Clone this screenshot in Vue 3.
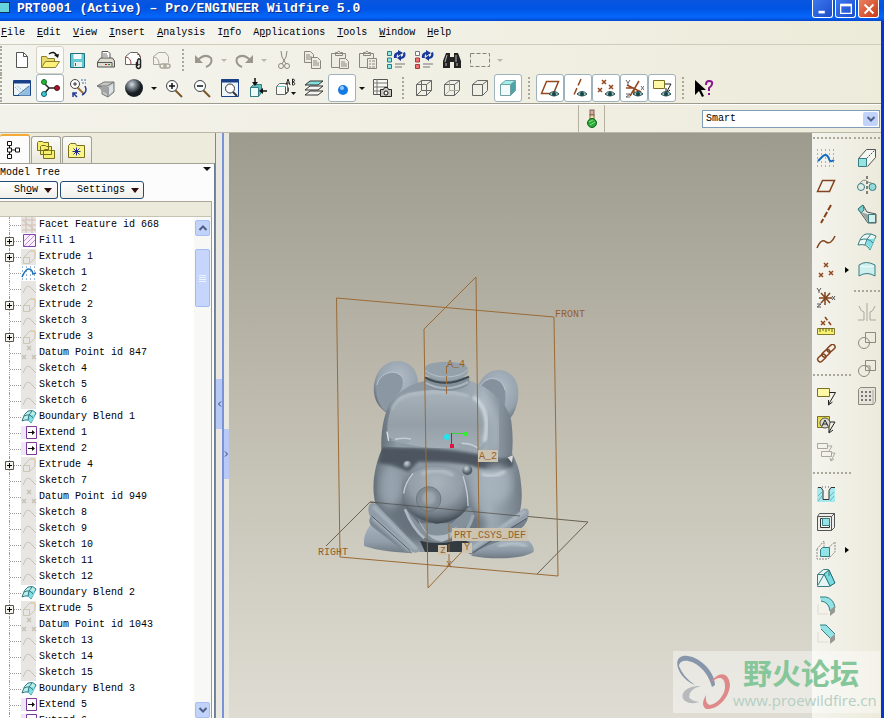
<template>
  <div class="window">
    <header class="titlebar">
      <span class="app-icon"></span>
      <h1>PRT0001 (Active) – Pro/ENGINEER Wildfire 5.0</h1>
      <div class="window-controls">
        <button type="button" aria-label="Minimize">
          <svg viewBox="0 0 18 18"><path d="M4 12.500h7" stroke="#fff" stroke-width="3" /></svg>
        </button>
        <button type="button" aria-label="Maximize">
          <svg viewBox="0 0 18 18"><path d="M3 4h12v10H3z" stroke="#fff" fill="none" stroke-width="1.500" /><path d="M2.500 4.500h13" stroke="#fff" stroke-width="3" /></svg>
        </button>
        <button type="button" class="close" aria-label="Close">
          <svg viewBox="0 0 18 18"><path d="M4 4l10 10M14 4L4 14" stroke="#fff" stroke-width="2.200" /></svg>
        </button>
      </div>
    </header>

    <div class="frame">
      <nav class="menubar">
        <a v-for="m in menus" :key="m.join('')" href="#">{{ m[0] }}<u>{{ m[1] }}</u>{{ m[2] }}</a>
      </nav>

      <div class="toolbars">
        <div v-for="(row, r) in toolbars" :key="r" class="toolbar">
          <template v-for="(item, i) in row" :key="i">
            <span v-if="item === '|'" class="grip"></span>
            <button v-else-if="item === 'v' || item === 'w'" type="button" class="drop" aria-label="More">
              <svg viewBox="0 0 8 5"><path d="M1 1h6L4 4z" :fill="item === 'v' ? '#111' : '#bbb9ae'" /></svg>
            </button>
            <button
              v-else
              type="button"
              class="tool"
              :class="{ pressed: pressed.includes(item), hover: item === 'open' }"
              :aria-label="item"
            >
              <svg viewBox="0 0 20 20" fill="none" v-html="icons[item]"></svg>
            </button>
          </template>
        </div>
      </div>

      <div class="message-bar">
        <span class="status-cell">
          <svg viewBox="0 0 12 20">
            <rect x="4" y="1" width="4" height="5" fill="#d8aaa0" stroke="#7c6258" />
            <rect x="4" y="6" width="4" height="4" fill="#f0e8a0" stroke="#7c6258" />
            <circle cx="6" cy="14" r="4.500" fill="#29ac35" stroke="#126320" />
            <path d="M3 13l4-2M4 16l5-3" stroke="#8fe08c" />
          </svg>
        </span>
        <label class="filter">
          <select v-model="filter" aria-label="Selection filter">
            <option>Smart</option>
            <option>Features</option>
            <option>Geometry</option>
            <option>Datums</option>
          </select>
          <span class="filter-arrow"><svg viewBox="0 0 10 8"><path d="M1.500 2L5 5.500 8.500 2" fill="none" stroke="#4d6185" stroke-width="2" /></svg></span>
        </label>
      </div>

      <main class="workspace">
        <aside class="navigator">
          <div class="tabs">
            <button type="button" class="tab active" aria-label="Model Tree">
              <svg viewBox="0 0 20 20" fill="#fff" stroke="#111"><path d="M6.500 4v12M8.500 10h6" /><path d="M4.500 1.500h4v4h-4zM4.500 8h4v4h-4zM4.500 14.500h4v4h-4zM12.500 8h4v4h-4z" /></svg>
            </button>
            <button type="button" class="tab" aria-label="Folder Browser">
              <svg viewBox="0 0 20 20" fill="#f7ef70" stroke="#77701c"><path d="M1.500 2.500l1-1h4l1 1h5v8h-11zM4.500 6.500l1-1h4l1 1h5v8h-11zM7.500 10.500l1-1h4l1 1h5v8h-11z" /></svg>
            </button>
            <button type="button" class="tab" aria-label="Favorites">
              <svg viewBox="0 0 20 20"><path d="M1.500 5.500l2-2h5l1 2h8v12h-16z" fill="#fbf58c" stroke="#77701c" /><path d="M9.500 7.500v8M5.500 11.500h8M6.500 8.500l6 6M12.500 8.500l-6 6" stroke="#1c2c98" /></svg>
            </button>
          </div>
          <section class="panel">
            <div class="panel-head">
              <h2>Model Tree</h2>
              <svg class="panel-menu" viewBox="0 0 8 5"><path d="M0 0h8L4 4z" fill="#111" /></svg>
            </div>
            <div class="panel-actions">
              <button type="button" class="show">Sh<u>o</u>w <svg viewBox="0 0 8 5"><path d="M0 0h8L4 5z" fill="#300c0c" /></svg></button>
              <button type="button" class="settings">Settin<u>g</u>s <svg viewBox="0 0 8 5"><path d="M0 0h8L4 5z" fill="#300c0c" /></svg></button>
            </div>
            <div class="column-head"></div>
            <div class="tree-wrap">
              <ul class="tree">
                <li v-for="node in tree" :key="node.label">
                  <button v-if="node.type === 'extrude' || node.type === 'fill'" type="button" class="expand" :aria-label="`Expand ${node.label}`">
                    <svg viewBox="0 0 9 9"><path d="M.5.5h8v8h-8z" fill="#f4f2ea" stroke="#555" /><path d="M2 4.500h5M4.500 2v5" stroke="#000" /></svg>
                  </button>
                  <span class="branch"></span>
                  <svg class="node-icon" viewBox="0 0 16 16" fill="none" v-html="nodeIcons[node.type]"></svg>
                  <span>{{ node.label }}</span>
                </li>
              </ul>
              <div class="scrollbar">
                <button type="button" aria-label="Scroll up"><svg viewBox="0 0 10 8"><path d="M1.500 6L5 2.500 8.500 6" fill="none" stroke="#4d6185" stroke-width="2" /></svg></button>
                <div class="track"><div class="thumb"><i></i><i></i><i></i><i></i></div></div>
                <button type="button" aria-label="Scroll down"><svg viewBox="0 0 10 8"><path d="M1.500 2L5 5.500 8.500 2" fill="none" stroke="#4d6185" stroke-width="2" /></svg></button>
              </div>
            </div>
          </section>
        </aside>

        <div class="sash sash-left">
          <button type="button" aria-label="Collapse navigator"><svg viewBox="0 0 5 6"><path d="M4 .5L1.500 3 4 5.500" fill="none" stroke="#27407c" /></svg></button>
        </div>
        <div class="sash sash-right">
          <button type="button" aria-label="Expand browser"><svg viewBox="0 0 5 6"><path d="M1 .5L3.500 3 1 5.500" fill="none" stroke="#27407c" /></svg></button>
        </div>

        <section class="viewport">
          <svg class="scene" viewBox="229 133 583 585" preserveAspectRatio="xMidYMid meet">
            <defs>
              <linearGradient id="skin" x1="0" y1="0" x2="1" y2="0">
                <stop offset="0" stop-color="#66717b" />
                <stop offset=".12" stop-color="#8e9aa4" />
                <stop offset=".45" stop-color="#8c97a1" />
                <stop offset=".78" stop-color="#a3afb9" />
                <stop offset="1" stop-color="#717c86" />
              </linearGradient>
              <linearGradient id="cap" x1="0" y1="0" x2="0" y2="1">
                <stop offset="0" stop-color="#a7b2ba" />
                <stop offset=".6" stop-color="#949fa8" />
                <stop offset="1" stop-color="#a3aeb7" />
              </linearGradient>
              <radialGradient id="muzzle" cx=".5" cy=".28" r=".72">
                <stop offset="0" stop-color="#a9b4bd" />
                <stop offset=".55" stop-color="#929da7" />
                <stop offset=".8" stop-color="#6d7882" />
                <stop offset="1" stop-color="#3d464e" />
              </radialGradient>
              <radialGradient id="ear" cx=".55" cy=".35" r=".65">
                <stop offset="0" stop-color="#b3bec8" />
                <stop offset=".7" stop-color="#95a1ac" />
                <stop offset="1" stop-color="#656f79" />
              </radialGradient>
              <linearGradient id="limb" x1="0" y1="0" x2="0" y2="1">
                <stop offset="0" stop-color="#a6b2bc" />
                <stop offset=".6" stop-color="#919da8" />
                <stop offset="1" stop-color="#6f7a85" />
              </linearGradient>
              <radialGradient id="bead" cx=".4" cy=".3">
                <stop offset="0" stop-color="#cdd6dc" />
                <stop offset="1" stop-color="#56616b" />
              </radialGradient>
              <filter id="soft"><feGaussianBlur stdDeviation="5" /></filter>
              <filter id="softer"><feGaussianBlur stdDeviation="12" /></filter>
              <clipPath id="body-clip"><path :d="bodyPath" /></clipPath>
            </defs>

            <path d="M326 546L370 502 588 522 537 574" fill="none" stroke="#6b6250" />

            <g transform="translate(355 350) scale(.3333)">
              <!-- ears -->
              <path d="M100 190C55 168 43 110 72 62C98 25 150 24 175 55Q187 72 190 98L140 150z" fill="url(#ear)" />
              <path d="M66 105C72 68 122 54 140 80C152 108 132 132 112 150L94 186C70 170 60 135 66 105z" fill="#8b97a2" />
              <path d="M66 105C72 68 122 54 140 80" fill="none" stroke="#bcc6ce" stroke-width="3" />
              <path d="M362 135C368 90 400 55 440 61C488 70 498 120 485 165C476 202 455 221 430 221z" fill="url(#ear)" />
              <path d="M376 108C398 72 442 82 450 120C456 160 442 200 430 219C418 190 400 165 366 142z" fill="#85919c" />
              <path d="M376 108C398 72 442 82 450 120" fill="none" stroke="#bcc6ce" stroke-width="3" />

              <!-- body and head -->
              <path :d="bodyPath" fill="url(#skin)" />
              <path d="M80 320C76 265 82 215 95 182C108 145 145 105 212 92H342C395 105 466 160 470 222Q476 275 470 322Q430 365 370 345Q240 290 80 320z" fill="url(#skin)" />
              <path d="M372 140Q420 175 425 235T415 300" fill="none" stroke="#bdc8d0" stroke-width="26" opacity=".6" filter="url(#softer)" />
              <g clip-path="url(#body-clip)">
                <path d="M76 292Q240 290 370 312Q420 335 474 320V350Q420 370 365 352Q330 335 190 335L160 365Q110 345 70 340z" fill="#4d5760" filter="url(#soft)" />
                <path d="M170 370Q140 400 140 450L60 460 150 570 340 600 400 520Q345 480 330 385z" fill="#5a656f" opacity=".75" filter="url(#softer)" />
                <ellipse cx="105" cy="415" rx="30" ry="65" fill="#9aa6b0" opacity=".8" filter="url(#softer)" />
                <ellipse cx="425" cy="400" rx="45" ry="60" fill="#a8b4be" opacity=".8" filter="url(#softer)" />
                <path d="M380 372q35 14 70-8" fill="none" stroke="#d5dce1" stroke-width="7" filter="url(#soft)" />
                <path d="M505 380v140" stroke="#4d5861" stroke-width="14" filter="url(#soft)" />
              </g>
              <path d="M99 262C92 215 106 160 140 137C195 115 300 112 352 140C392 165 402 215 388 280Q345 294 245 294Q150 290 99 262z" fill="url(#cap)" />
              <path d="M355 140C394 170 402 215 388 276" fill="none" stroke="#d3dbe0" stroke-width="10" filter="url(#soft)" />
              <path d="M108 178Q120 148 160 134Q250 118 340 136" fill="none" stroke="#bcc6cd" stroke-width="5" filter="url(#soft)" />
              <path d="M96 245l5 28" stroke="#dfe5e8" stroke-width="4" />
              <path d="M105 270q35-12 65-6l-10 14q-30 4-55-8zM302 284q35-12 72 10l25-24-20 36q-40 0-77-22z" fill="#98a4ae" />
              <path d="M120 268q25-6 48-1M320 280q30 0 48 14" fill="none" stroke="#c4cdd4" stroke-width="5" />
              <path d="M458 322l16-6-3 22z" fill="#d8dbd9" />

              <!-- scarf and mouth -->
              <path d="M150 475Q165 535 205 560Q250 590 300 560Q340 530 358 492L345 470 290 520H190z" fill="#84909a" />
              <path d="M188 505L218 552Q250 562 285 550L305 528Q300 565 260 575Q215 570 188 505z" fill="#b0bbc3" />
              <path d="M150 478Q172 535 208 565" fill="none" stroke="#adb8c1" stroke-width="8" />
              <path d="M355 495Q340 545 300 580" fill="none" stroke="#9aa6b0" stroke-width="10" />
              <path d="M195 572Q255 588 325 568L345 580 325 606H210z" fill="#333a40" />

              <!-- muzzle, nose and eyes -->
              <path d="M175 368C212 344 290 345 324 378Q342 425 340 465C325 500 290 518 245 521C195 513 146 488 144 440Q148 400 175 368z" fill="url(#muzzle)" />
              <path d="M324 378q15 45 15 90M174 370q-25 30-28 60" fill="none" stroke="#c5ced5" stroke-width="4" />
              <path d="M200 372q50-22 95 5" fill="none" stroke="#bac4cb" stroke-width="8" filter="url(#soft)" />
              <circle cx="221" cy="447" r="37" fill="#7f8b95" stroke="#5f6a74" stroke-width="2" />
              <circle cx="222" cy="444" r="21" fill="#9ba6af" filter="url(#soft)" />
              <circle cx="158" cy="346" r="14" fill="url(#bead)" />
              <circle cx="337" cy="361" r="15" fill="url(#bead)" />

              <!-- arms and feet -->
              <path d="M46 525C30 545 24 570 28 588C65 602 120 606 172 610L110 555z" fill="url(#limb)" />
              <path d="M44 462Q60 452 78 478L195 600Q188 612 172 606L48 505Q34 482 44 462z" fill="#8f9ba6" />
              <path d="M46 500Q38 518 52 530L150 606 172 608z" fill="#7b8791" />
              <path d="M55 470L185 598M52 505L165 602" fill="none" stroke="#b4bfc8" stroke-width="7" filter="url(#soft)" />
              <path d="M50 498L166 602" stroke="#4f5a63" stroke-width="3" />
              <path d="M505 476Q526 472 520 498L370 600Q340 618 328 604L350 565 430 535z" fill="#929ea9" />
              <path d="M520 500Q515 530 480 545L375 616 340 612z" fill="#75818c" />
              <path d="M512 482L350 596" stroke="#b4bfc8" stroke-width="8" filter="url(#soft)" />
              <path d="M516 504L355 608" stroke="#505b64" stroke-width="3" />
              <path d="M348 617C380 588 430 575 485 560C525 562 542 592 535 606C500 630 400 628 348 617z" fill="url(#limb)" />
              <path d="M430 590q50-20 85 0" fill="none" stroke="#b9c4cc" stroke-width="10" filter="url(#soft)" />

              <!-- neck -->
              <path d="M208 82V100Q230 125 280 122 330 120 343 98V80z" fill="#828e98" />
              <path d="M212 98q60 34 128-2" fill="none" stroke="#a9b4bd" stroke-width="7" />
              <path d="M210 82q60 34 132-2" fill="none" stroke="#3f484f" stroke-width="6" />
              <path d="M209 55V72Q240 94 280 92 325 88 338 70V52z" fill="#96a2ac" />
              <ellipse cx="273" cy="55" rx="64" ry="20" fill="#95a1aa" />
              <path d="M209 60q25 22 66 21 45-1 62-22" fill="none" stroke="#b5c0c8" stroke-width="3" />
            </g>

            <g class="datum">
              <path d="M336.500 298L554 317 558 576 340 557z" />
              <path d="M424 329L476 277 479 530M424 329L428 588 468 545" />
              <path d="M446.500 366v28M449 524v42" stroke-dasharray="8 2" />
              <path d="M370 502L520 516" stroke="#4e4c46" opacity=".7" />
            </g>
            <g class="tags">
              <path d="M478 450h20v12h-20zM452 528h76v13h-76zM438 545h9v10h-9zM462 543h10v10h-10z" />
            </g>
            <g class="labels">
              <text x="555" y="317">FRONT</text>
              <text x="318" y="555">RIGHT</text>
              <text x="447" y="367">A_4</text>
              <text x="479" y="459">A_2</text>
              <text x="454" y="538">PRT_CSYS_DEF</text>
              <text x="440" y="553">z</text>
              <text x="464" y="550">Y</text>
              <text x="446" y="567">x</text>
            </g>
            <path d="M452 433.500h14" stroke="#39d438" /><path d="M463 432h5v4h-5z" fill="#30f030" />
            <path d="M451.500 433v13" stroke="#a12158" /><path d="M450 444h4v4h-4z" fill="#e01442" />
            <circle cx="447" cy="437" r="3" fill="#23e3ed" />
          </svg>
        </section>

        <aside class="feature-bars">
          <div v-for="(col, c) in featureBars" :key="c" class="feature-col">
            <span class="hgrip"></span>
            <template v-for="(item, i) in col" :key="i">
              <span v-if="item === '|'" class="hgrip spaced"></span>
              <div v-else class="feature-row">
                <button type="button" class="tool" :aria-label="item">
                  <svg viewBox="0 0 20 20" fill="none" v-html="icons[item]"></svg>
                </button>
                <svg v-if="item === 'points' || item === 'rib'" class="flyout" viewBox="0 0 4 6"><path d="M0 0v6l4-3z" fill="#000" /></svg>
              </div>
            </template>
          </div>
        </aside>

        <div class="watermark">
          <svg viewBox="0 0 60 58" fill="none">
            <path d="M42 32C42 18 24 1 10 3C-2 6 6 26 22 32Q10 24 6 13C7 2 32 8 39 34z" fill="#8796aa" />
            <path d="M28 33C14 32 5 41 12 48q6 4 14 1-8-1-10-5 0-8 12-11z" fill="#b6babc" />
            <path d="M37 30C45 18 56 18 57 32C56 46 44 57 33 56Q27 52 33 42 32 51 37 52C46 50 53 40 52 32 51 22 44 24 37 30z" fill="#df8a8a" />
          </svg>
          <div>
            <strong>野火论坛</strong>
            <span>www.proewildfire.cn</span>
          </div>
        </div>
      </main>
    </div>
  </div>
</template>

<script setup>
import { ref } from 'vue'

const filter = ref('Smart')

const menus = [
  ['', 'F', 'ile'],
  ['', 'E', 'dit'],
  ['', 'V', 'iew'],
  ['', 'I', 'nsert'],
  ['', 'A', 'nalysis'],
  ['I', 'n', 'fo'],
  ['A', 'p', 'plications'],
  ['', 'T', 'ools'],
  ['', 'W', 'indow'],
  ['', 'H', 'elp'],
]

// '|' is a grip, 'v' a drop arrow, 'w' a disabled drop arrow
const toolbars = [
  ['new', 'open', 'save', 'print', 'mail', 'mailLink', '|', 'undo', 'w', 'redo', 'w', 'cut', 'copy', 'paste', 'pasteSpecial', 'regenerate', 'regenManager', 'find', 'select', 'w'],
  ['repaint', 'spinCenter', 'orientMode', 'viewManager', 'shade', 'v', 'zoomIn', 'zoomOut', 'refit', 'reorient', 'savedViews', 'layers', 'sphere', 'v', 'scene', '|', 'wireframe', 'hiddenLine', 'noHidden', 'shading', '|', 'planeDisplay', 'axisDisplay', 'pointDisplay', 'csysDisplay', 'noteDisplay', '|', 'help'],
]

const pressed = ['spinCenter', 'sphere', 'shading', 'planeDisplay', 'axisDisplay', 'pointDisplay', 'csysDisplay', 'noteDisplay']

const featureBars = [
  ['sketch', 'plane', 'axis', 'curve', 'points', 'csys', 'ruler', 'chain', '|', 'note', 'noteSymbol', 'noteGroup', '|', 'hole', 'shell', 'rib', 'draft', 'round', 'chamfer'],
  ['extrude', 'revolve', 'sweep', 'blend', 'style', '|', 'mirror', 'merge', 'trim', 'pattern'],
]

const bodyPath = 'M84 290C60 340 50 400 58 445C62 485 85 515 120 560L195 606H345L470 550C500 500 504 440 498 400C495 360 485 335 466 300z'

const eye = '<path d="M9 16q5-5 10 0-5 4-10 0z" fill="#9cc4c0" stroke="#244c4c"/><circle cx="14" cy="16" r="2" fill="#164444"/>'
const cube = '<path d="M2.500 6.500h10v11h-10zM2.500 6.500l5-4h10l-5 4M17.500 2.500v10l-5 5"'
const lens = (mark) => `<path d="M11 12l7 7" stroke="#7c5429" stroke-width="2"/><circle cx="8" cy="8" r="5.500" fill="#f7fbfd" stroke="#444"/><path d="${mark}" stroke="#111" stroke-width="1.500"/>`
const cross = (x, y, c = '#94481f') => `<path d="M${x - 2} ${y - 2}l4 4m0-4l-4 4" stroke="${c}" stroke-width="1.500"/>`
const arrows = '<path d="M8 8q-1-5 4-6V0l5 3-5 3V4q-2 1-1 4zM19 2q2 6-4 7v2l-4-3 4-3v2q3-1 2-4z" fill="#19389c"/><path d="M9 14h10M9 17h7" stroke="#777"/>'

const icons = {
  new: '<path d="M4.500 2.500h7l4 4v11h-11z" fill="#fff" stroke="#555"/><path d="M11.500 2.500v4h4" stroke="#555"/>',
  open: '<path d="M1.500 17.500v-11h5l1 2h7v3" fill="#e8d96b" stroke="#8b8030"/><path d="M1.500 17.500l4-6h14l-4 6z" fill="#fff27b" stroke="#8b8030"/><path d="M9 4q5-4 8 2" stroke="#111" stroke-width="1.500"/><path d="M14 5l5-1-1 4z" fill="#111"/>',
  save: '<path d="M2.500 3.500h14v14h-14z" fill="#61cbd1" stroke="#246f80"/><path d="M5.500 4h8v5h-8z" fill="#f5fbfb"/><path d="M6 12h8v5H6z" fill="#e7eef0"/><path d="M7.500 13v3" stroke="#246f80"/>',
  print: '<path d="M6 9V1.500h6l2 2V9" fill="#fff" stroke="#555"/><path d="M7 4h4M7 6h5" stroke="#777"/><path d="M1.500 12l3-4h12l2 3v6h-17z" fill="#dedbd0" stroke="#555"/><path d="M2 12.500h14v4" stroke="#555"/><path d="M9 14.500h2" stroke="#b52727"/><path d="M12 14.500h2" stroke="#24852c"/>',
  mail: '<path d="M1.500 14.500v-8l5-4h7l3 4v8z" fill="#fff" stroke="#666"/><path d="M7 14q0-6-5-7M13 4q3 0 3 3" stroke="#963333"/><path d="M12.500 12v5q2 3 4 0v-7q-2-3-3 1v5" stroke="#222" stroke-width="1.500"/>',
  mailLink: '<g stroke="#aaa79c"><path d="M1.500 14.500v-8l5-4h7l3 4v6M7 14q0-6-5-7M1.500 14.500h7"/><rect x="8" y="14" width="6" height="4" rx="2" stroke-width="1.500"/><rect x="12" y="14" width="6" height="4" rx="2" stroke-width="1.500"/></g>',
  undo: '<path d="M4 10q7-7 13-2 2 6-5 9" stroke="#9a978d" stroke-width="2"/><path d="M1 5v8h8z" fill="#9a978d"/>',
  redo: '<path d="M16 10q-7-7-13-2-2 6 5 9" stroke="#9a978d" stroke-width="2"/><path d="M19 5v8h-8z" fill="#9a978d"/>',
  cut: '<path d="M7 1l1 6 4 7M13 1l-1 6-4 7" stroke="#8a877e"/><circle cx="7" cy="16" r="2.500" stroke="#8a877e"/><circle cx="13" cy="16" r="2.500" stroke="#8a877e"/>',
  copy: '<g fill="#eeede4" stroke="#8a877e"><path d="M2.500 1.500h6l3 3v8h-9z"/><path d="M9.500 7.500h6l3 3v8h-9z"/><path d="M4 5h4M4 7h6M4 9h6M11 11h4M11 13h6M11 15h6"/></g>',
  paste: '<g fill="#eeede4" stroke="#8a877e"><path d="M1.500 3.500h14v14h-14zM5.500 5.500v-3h2q1-3 3 0h2v3z"/><path d="M9.500 8.500h6l3 3v7h-9z"/><path d="M11 12h4M11 14h6M11 16h6"/></g>',
  pasteSpecial: '<g fill="#eeede4" stroke="#8a877e"><path d="M1.500 3.500h14v14h-14zM5.500 5.500v-3h2q1-3 3 0h2v3z"/><path d="M9.500 8.500h9v10h-9z"/><path d="M11 11h2M11 14h2M11 17h2M14 11h3M14 14h3M14 17h3"/></g>',
  regenerate: '<path d="M1.500 1.500h4v4h-4zM1.500 8h4v4h-4zM1.500 14.500h4v4h-4z" fill="#91e7e6" stroke="#287c83"/>' + arrows,
  regenManager: '<path d="M1.500 1.500h4v4h-4z" fill="#fff" stroke="#777"/><path d="M1.500 8h4v4h-4zM1.500 14.500h4v4h-4z" fill="#f07272" stroke="#a43b3b"/>' + arrows,
  find: '<path d="M4 3h4v4h4V3h4l3 8v7h-7v-6H8v6H1v-7z" fill="#222"/><path d="M5 5l-2 7M14 5v7M4 13v3M15 13v3" stroke="#b9b9b5"/>',
  select: '<path d="M.5 3.500h19v13H.5z" stroke="#85827a" stroke-dasharray="4 2"/>',
  repaint: '<path d="M1.500 2.500h17v15h-17z" fill="#ecf5fa" stroke="#19418a"/><path d="M7 17.500L18 7v10.500z" fill="#92bddd"/><path d="M2 4h16" stroke="#19418a" stroke-width="3"/><path d="M3 9l8 8M5 8l8 6" stroke="#92bddd" stroke-dasharray="2 1"/><path d="M6 17L17 8" stroke="#467099"/>',
  spinCenter: '<path d="M4 5l5 5-5 6M9 10h8" stroke="#222" stroke-width="1.500"/><circle cx="4" cy="4" r="2.500" fill="#21b838" stroke="#176926"/><circle cx="4" cy="16" r="2.500" fill="#38cdd8" stroke="#175b67"/><circle cx="17" cy="10" r="2.500" fill="#a61829" stroke="#560b16"/>',
  orientMode: '<path d="M9 9l7 7" stroke="#9a7139" stroke-width="2"/><circle cx="7" cy="6" r="4.500" fill="#fff" stroke="#444"/><path d="M7 4v4M5 6h4" stroke="#333"/><path d="M13 2h5M14 5h4" stroke="#3972b0" stroke-dasharray="2 1"/><path d="M17 8q3 6-3 9M5 19v-4h4M5 15l4 4" stroke="#233a97" stroke-width="1.500"/>',
  viewManager: '<path d="M1 8l7-4h10v10l-6 5-6-3V9z" fill="#c5c7c6" stroke="#777"/><path d="M1 8h10l7-4M12 19V9" stroke="#777"/><path d="M13 9l4-3v7l-4 4z" fill="#dce2e6"/><path d="M2 9h9v7l-5-3z" fill="#a0a2a3"/>',
  shade: '<defs><radialGradient id="ball" cx=".38" cy=".3"><stop stop-color="#d7dde1"/><stop offset=".5" stop-color="#6f7981"/><stop offset="1" stop-color="#171d22"/></radialGradient></defs><circle cx="10" cy="10" r="9" fill="url(#ball)"/>',
  zoomIn: lens('M5 8h6M8 5v6'),
  zoomOut: lens('M5 8h6'),
  refit: '<path d="M1.500 1.500h17v17h-17z" fill="#eef5fa" stroke="#19418a"/><path d="M1 3h18" stroke="#19418a" stroke-width="3"/><circle cx="10" cy="10.500" r="4.500" fill="#fff" stroke="#333"/><path d="M13 14l4 4" stroke="#333" stroke-width="2"/>',
  reorient: '<path d="M2.500 9.500l3-3h8v8l-3 4h-8z" fill="#5fbdbb" stroke="#397d83"/><path d="M2.500 9.500h8v9h-8z" fill="#eefafa" stroke="#397d83"/><path d="M7 0v5M14 13h5" stroke="#111" stroke-width="1.500"/><path d="M4 4h6L7 8zM15 10v6l-4-3z" fill="#111"/>',
  savedViews: '<path d="M.5 8.500l3-3h8v8l-3 3h-8z" fill="#f8f8f4" stroke="#666"/><path d="M1 8.500h8" stroke="#6fc4c2"/><path d="M9.500 8.500v8l3-3v-4" stroke="#555"/><path d="M10 7l2-6 2 6M11 5h2M16.500 7V1h1q2 1 0 3h-1 1q3 2 0 3z" stroke="#222"/><path d="M15 14h5l-2.500 3z" fill="#111"/>',
  layers: '<g stroke="#333"><path d="M1 17l5-4h13l-5 4zM1 12l5-4h13l-5 4z" fill="#f3f4ef"/><path d="M1 7l5-4h13l-5 4z" fill="#83dedb"/></g>',
  sphere: '<circle cx="11" cy="12" r="5" fill="#147ae6"/><circle cx="10" cy="10" r="2" fill="#9ac9fa"/>',
  scene: '<path d="M1.500 1.500h14v15h-14z" fill="#f8f8f2" stroke="#555"/><path d="M1 5h14M1 9h14M1 13h14M5 1v15" stroke="#777"/><path d="M8.500 11.500h3l1-2h3l1 2h3v7h-11z" fill="#c7c5bc" stroke="#222"/><circle cx="14" cy="15" r="2" fill="#fff" stroke="#111"/>',
  wireframe: cube + ' stroke="#666"/><path d="M7.500 2.500v10h10M7.500 12.500l-5 5" stroke="#666"/>',
  hiddenLine: cube + ' stroke="#666"/><path d="M7.500 2.500v10h10M7.500 12.500l-5 5" stroke="#aaa99e"/>',
  noHidden: cube + ' stroke="#666"/>',
  shading: '<path d="M2.500 6.500h10v11h-10z" fill="#f3fbfa"/><path d="M2.500 6.500l5-4h10l-5 4z" fill="#9eeeea"/><path d="M12.500 6.500l5-4v10l-5 5z" fill="#4da3a5"/>' + cube + ' stroke="#6fa3a5"/>',
  planeDisplay: '<path d="M1.500 15.500l5-12h12l-5 12z" stroke="#94481f" stroke-width="1.500"/>' + eye,
  axisDisplay: '<path d="M13 1L5 19" stroke="#94481f" stroke-width="1.500" stroke-dasharray="7 3"/>' + eye,
  pointDisplay: cross(8, 4) + cross(4, 12) + cross(15, 9) + eye,
  csysDisplay: '<path d="M3 7l14 7M15 3L6 18M10 10v7M10 10H2" stroke="#94481f" stroke-width="1.500"/><path d="M2 2l2 3 2-3M4 5v2M2 16h4l-4 3h4M17 8l3 4m0-4l-3 4" stroke="#666"/>' + eye,
  noteDisplay: '<path d="M1.500 2.500h11v8h-11z" fill="#fff9a6" stroke="#797225"/><path d="M13 6h6l-5 9M14 10v5l4-3" stroke="#222"/>' + eye,
  help: '<path d="M1 2v15l4-4 3 6 2-1-3-6h5z" fill="#000"/><path d="M12 7q0-4 3-4 4 0 3 3 0 2-3 4v3M14 16h2" stroke="#8a1390" stroke-width="2"/>',
  sketch: '<path d="M1 2h18M1 6h18M1 10h18M1 14h18M1 18h18" stroke="#4878ae" stroke-dasharray="1 3"/><path d="M2 13l5-5q4-3 6 3 1 4 5 1" stroke="#176bc0" stroke-width="2"/>',
  plane: '<path d="M1.500 15.500l5-11h12l-5 11z" stroke="#82431d" stroke-width="1.500"/>',
  axis: '<path d="M15 1L5 19" stroke="#82431d" stroke-width="2" stroke-dasharray="6 2"/>',
  curve: '<path d="M1 16q4-10 9-6 5 3 9-6" stroke="#82431d" stroke-width="1.500"/>',
  points: cross(10, 5) + cross(5, 15) + cross(15, 13),
  csys: '<path d="M9 4v13M3 10h13M5 5l9 10M14 5L5 15" stroke="#82431d" stroke-width="1.500"/><path d="M1 0l2 3 2-3M3 3v2M1 16h4l-4 3h4M16 8l3 4m0-4l-3 4" stroke="#555"/>',
  ruler: cross(7, 7) + '<path d="M9 1l6 8" stroke="#82431d" stroke-width="1.500" stroke-dasharray="4 2"/><path d="M1.500 12.500h17v6h-17z" fill="#f6f16e" stroke="#81792b"/><path d="M4 12v4M7 12v3M10 12v4M13 12v3M16 12v4" stroke="#666025"/>',
  chain: '<g stroke="#82431d" stroke-width="1.500"><rect x="1" y="12" width="9" height="5" rx="2.500" transform="rotate(-42 5 14)"/><rect x="6" y="7" width="9" height="5" rx="2.500" transform="rotate(-42 10 10)"/><rect x="11" y="2" width="9" height="5" rx="2.500" transform="rotate(-42 15 5)"/></g>',
  note: '<path d="M1.500 2.500h12v8h-12z" fill="#fff9a6" stroke="#797225"/><path d="M13.500 6.500h6l-7 12M12.500 14v5l4-3" stroke="#222"/>',
  noteSymbol: '<path d="M1.500 2.500h12v11h-12z" fill="#e9dd57" stroke="#797225"/><circle cx="9" cy="9" r="5" fill="#d9dad1" stroke="#555"/><path d="M6 12l3-6 3 6M7 10h4M14 8h5l-6 10M13 14v5l4-3" stroke="#222"/>',
  noteGroup: '<g stroke="#aaa89d"><path d="M1.500 1.500h10v5h-10zM5.500 9.500h10v5h-10zM12 4h4l-3 5M16 11h3l-4 8M14 16l1 3 3-2"/></g>',
  hole: '<path d="M1 3h4l2 3v10h6V6l2-3h4v15H1z" fill="#a7eaed"/><path d="M2 3.500h3l2 3v9h6v-9l2-3h4" stroke="#333"/><path d="M6 3h9" stroke="#555" stroke-dasharray="1 2"/><path d="M2 17l4-5M2 12l4-4M14 17l4-5M14 12l4-4" stroke="#61b8c2"/>',
  shell: '<path d="M1.500 4.500l2-3h15v14l-3 3h-14z" fill="#eceee9" stroke="#555"/><path d="M1.500 4.500h14v14M15.500 4.500l3-3" stroke="#555"/><path d="M4.500 6.500h9v9h-9z" fill="#f4f7f4" stroke="#333"/><path d="M6.500 6.500h7v7h-7z" fill="#93e4e9" stroke="#397d83"/>',
  rib: '<path d="M1 9l7-8v6M1 9v10h11l7-7V2l-7 6" stroke="#888" stroke-dasharray="2 1"/><path d="M4.500 16.500v-7l2-2h7v9z" fill="#8fe5e8" stroke="#397d83"/>',
  draft: '<path d="M1.500 17.500v-11l6-5h5l6 13-5 4h-12z" fill="#e4f6f3" stroke="#397d83"/><path d="M8 6l5-4 6 13-5 3z" fill="#76dee3" stroke="#26676d"/><path d="M2 6.500h6L2 17M13 2v6" stroke="#397d83"/>',
  round: '<path d="M4 1h6q8 2 9 12l-5 4q0-10-9-12z" fill="#93e3e4"/><path d="M4 1h6q8 2 9 11M5 5q8 1 9 10" stroke="#397d83"/><path d="M14 14l5-4v6l-5 4z" fill="#969a94"/><path d="M2 8v10h10" stroke="#dcdbd1"/>',
  chamfer: '<path d="M4 1h6l9 9-5 4-9-9z" fill="#93e3e4"/><path d="M4 1h6l9 9M5 5l9 9" stroke="#397d83"/><path d="M14 14l5-4v6l-5 4z" fill="#969a94"/><path d="M2 8v10h10" stroke="#dcdbd1"/>',
  extrude: '<path d="M1.500 10.500l8-9h9v8l-8 9" fill="#f5f7f1" stroke="#555"/><path d="M1.500 10.500h8v8h-8z" fill="#95e4e3" stroke="#397d83"/><path d="M9.500 10.500l9-9" stroke="#555" stroke-dasharray="2 1"/>',
  revolve: '<path d="M10 0v20" stroke="#111" stroke-dasharray="3 2"/><path d="M2 9q4-8 9-3l6 2" stroke="#888"/><circle cx="4" cy="11" r="3.500" fill="#e1efeb" stroke="#397d83"/><circle cx="15.500" cy="11" r="3.500" fill="#91dcdb" stroke="#397d83"/>',
  sweep: '<path d="M1 5l5-4 4 7 9 2v9h-8L1 5z" fill="#dfe6e2" stroke="#555"/><path d="M1 5l5-4 1 5-3 3z" fill="#7bd2d2" stroke="#397d83"/><path d="M4 8l8 11v-8z" fill="#9ba39e"/><path d="M11.500 10.500h7v8h-7z" fill="#d5f1ee" stroke="#397d83"/>',
  blend: '<path d="M1 13Q4 3 9 2q5-1 10 2l-6 14q-3-7-12-5z" fill="#eaf8f6" stroke="#397d83"/><path d="M10 8q5-2 8-1l-5 11q-1-5-4-5z" fill="#7fdde3"/><path d="M14 2q-5 5-6 11M3 8q8-3 13 3" stroke="#397d83"/>',
  style: '<path d="M2 16V5q7-5 16 0v11q-8-5-16 0z" fill="#cdf0ee" stroke="#397d83"/><path d="M3 6q7 2 14 0" stroke="#f2fcfc"/>',
  mirror: '<g stroke="#aaa89d"><path d="M10 1v18M2 4q2 6 5 6v8H1M18 4q-2 6-5 6v8h6"/></g>',
  merge: '<g stroke="#8c897f"><path d="M8.500 2.500h10v10h-10z"/><circle cx="7" cy="13" r="5.500"/></g>',
  trim: '<g stroke="#8c897f"><path d="M8.500 2.500h10v10h-10z"/><circle cx="7" cy="13" r="5.500"/><path d="M9 8h4v5"/></g>',
  pattern: '<path d="M1.500 3.500l2-2h15v14l-2 3h-15z" fill="#e5e3da" stroke="#8b887f"/><path d="M16 4v14" stroke="#aaa89d"/><path d="M4 6h10M4 10h10M4 14h10" stroke="#777" stroke-width="2" stroke-dasharray="2 2"/>',
}

const faded = '<path d="M0 0h15v16H0z" fill="#e7e6e2"/>'

const nodeIcons = {
  facet: faded + '<path d="M1 3h14M1 8h14M1 13h14M5 0v16M11 0v16M1 3l14 11" stroke="#d4beb4"/>',
  fill: '<path d="M2.500 1.500h12v12h-12z" fill="#faf0ff" stroke="#8742ac"/><path d="M3 8l6-6M3 13L14 2M8 13l6-6" stroke="#bf8fd6"/>',
  extrude: faded + '<path d="M2.500 8.500h6v6h-6zM3 8l6-6M9 14l5-5V2H9" stroke="#c9c6b6"/><path d="M10 2h4v3" stroke="#ddd09e"/>',
  sketchActive: '<path d="M1 2h14M1 6h14M1 10h14M1 14h14" stroke="#4273a8" stroke-dasharray="1 3"/><path d="M1 12q4-9 7-8 3 0 4 5l3-1" stroke="#1772bd" stroke-width="1.500"/>',
  sketch: faded + '<path d="M2 12q4-12 10-3l3 3" stroke="#c6c3b7"/>',
  point: faded + cross(8, 3, '#c5c1b5') + cross(3, 12, '#c5c1b5') + cross(13, 12, '#c5c1b5'),
  blend: '<path d="M1 12Q3 4 7 2q5-2 8 2l-5 10q-3-5-9-2z" fill="#b9f0ef" stroke="#2c777d"/><path d="M8 7q4-2 6 0l-4 7-3-3z" fill="#7fdde3"/><path d="M11 2Q7 6 7 11M3 7q6-3 9 2" stroke="#2c777d"/>',
  extend: '<path d="M0 1h6v13H0z" fill="#eee5f9"/><path d="M5.500 1.500h10v12h-10z" fill="#fff" stroke="#7c3b9c"/><path d="M7 7.500h5" stroke="#111"/><path d="M11 5l3 2.500-3 2.500z" fill="#111"/>',
}

const tree = [
  ['facet', 'Facet Feature id 668'],
  ['fill', 'Fill 1'],
  ['extrude', 'Extrude 1'],
  ['sketchActive', 'Sketch 1'],
  ['sketch', 'Sketch 2'],
  ['extrude', 'Extrude 2'],
  ['sketch', 'Sketch 3'],
  ['extrude', 'Extrude 3'],
  ['point', 'Datum Point id 847'],
  ['sketch', 'Sketch 4'],
  ['sketch', 'Sketch 5'],
  ['sketch', 'Sketch 6'],
  ['blend', 'Boundary Blend 1'],
  ['extend', 'Extend 1'],
  ['extend', 'Extend 2'],
  ['extrude', 'Extrude 4'],
  ['sketch', 'Sketch 7'],
  ['point', 'Datum Point id 949'],
  ['sketch', 'Sketch 8'],
  ['sketch', 'Sketch 9'],
  ['sketch', 'Sketch 10'],
  ['sketch', 'Sketch 11'],
  ['sketch', 'Sketch 12'],
  ['blend', 'Boundary Blend 2'],
  ['extrude', 'Extrude 5'],
  ['point', 'Datum Point id 1043'],
  ['sketch', 'Sketch 13'],
  ['sketch', 'Sketch 14'],
  ['sketch', 'Sketch 15'],
  ['blend', 'Boundary Blend 3'],
  ['extend', 'Extend 5'],
  ['extend', 'Extend 6'],
].map(([type, label]) => ({ type, label }))
</script>

<style>
body {
  margin: 0;
  overflow: hidden;
}
</style>

<style scoped>
.window {
  display: flex;
  flex-direction: column;
  height: 100vh;
  font-family: 'Liberation Mono', monospace;
  font-size: 10px;
  line-height: 16px;
  color: #000;
}
button,
select {
  font: inherit;
  color: inherit;
  margin: 0;
  padding: 0;
  border: none;
  background: none;
}
svg {
  display: block;
  flex: none;
}
.titlebar {
  display: flex;
  align-items: flex-start;
  height: 21px;
  flex: none;
  background: linear-gradient(#0a56e0, #0054e3 40%, #0566fb 80%, #0348cf);
  color: #fff;
}
.app-icon {
  width: 9px;
  height: 9px;
  margin-top: 2px;
  background: #67d4dd;
  border: 1px solid #10315e;
  border-left: none;
}
h1 {
  flex: 1;
  margin: 0 0 0 7px;
  font-size: 13px;
  line-height: 18px;
  text-shadow: 1px 1px #0a2f88;
}
.window-controls {
  display: flex;
  gap: 2px;
  padding-right: 5px;
}
.window-controls button {
  width: 21px;
  height: 18px;
  border: 1px solid #fff;
  border-top: none;
  border-radius: 0 0 3px 3px;
  background: linear-gradient(135deg, #3d78ee, #1b4ccc);
}
.window-controls svg {
  width: 16px;
  height: 16px;
  margin: 0 auto;
}
.window-controls .close {
  background: linear-gradient(135deg, #ea8060, #c93b18);
}
.frame {
  flex: 1;
  min-height: 0;
  display: flex;
  flex-direction: column;
  border-right: 3px solid #0733d3;
  background: #ecebdc;
}
.menubar {
  display: flex;
  gap: 12px;
  height: 23px;
  flex: none;
  align-items: center;
  padding-left: 1px;
  background: linear-gradient(90deg, #f7f7f2, #ecead8);
  border-bottom: 1px solid #cfccba;
}
.menubar a {
  color: inherit;
  text-decoration: none;
}
.toolbars {
  flex: none;
  padding: 1px 0;
  background: linear-gradient(90deg, #f4f4ee, #edebda);
  border-bottom: 1px solid #9d9b8e;
}
.toolbar {
  display: flex;
  height: 28px;
  padding-left: 6px;
  border-left: 2px dotted #aaa79b;
}
.tool {
  display: flex;
  align-items: center;
  justify-content: center;
  width: 28px;
  height: 28px;
}
.tool svg {
  width: 20px;
  height: 20px;
}
.tool.pressed,
.tool.hover {
  border: 1px solid #9fb2bc;
  border-radius: 3px;
  background: #fff;
}
.tool.hover {
  border-color: #d5d2c4;
  background: #fafaf6;
}
.drop {
  width: 12px;
}
.drop svg {
  width: 8px;
  height: 5px;
  margin: 0 auto;
}
.grip {
  width: 2px;
  margin: 3px 6px;
  background: repeating-linear-gradient(#aaa79b 0 2px, transparent 2px 4px);
}
.message-bar {
  display: flex;
  height: 27px;
  flex: none;
  align-items: center;
  justify-content: flex-end;
  padding-right: 1px;
  border-top: 1px solid #fff;
  border-bottom: 1px solid #bab7a7;
  background: linear-gradient(90deg, #f3f2ea, #eeecdc);
}
.status-cell {
  display: flex;
  align-items: center;
  justify-content: center;
  align-self: stretch;
  width: 25px;
  margin-right: 97px;
  border: 1px solid #b4b1a3;
  border-width: 0 1px;
}
.status-cell svg {
  width: 12px;
  height: 20px;
}
.filter {
  display: flex;
  position: relative;
  width: 178px;
}
.filter select {
  flex: 1;
  height: 18px;
  padding-left: 3px;
  appearance: none;
  border: 1px solid #7f9db9;
  border-radius: 0;
  background: #fff;
}
.filter-arrow {
  position: absolute;
  top: 2px;
  right: 2px;
  display: flex;
  align-items: center;
  justify-content: center;
  width: 15px;
  height: 14px;
  border-radius: 2px;
  background: #c2d3fb;
  pointer-events: none;
}
.filter-arrow svg,
.scrollbar svg {
  width: 10px;
  height: 8px;
}
.workspace {
  flex: 1;
  min-height: 0;
  display: flex;
  position: relative;
}
.navigator {
  display: flex;
  flex-direction: column;
  width: 215px;
  flex: none;
}
.tabs {
  display: flex;
  align-items: flex-end;
  height: 30px;
  flex: none;
  gap: 1px;
}
.tab {
  display: flex;
  align-items: center;
  justify-content: center;
  width: 30px;
  height: 27px;
  border: 1px solid #a2a195;
  border-bottom: none;
  border-radius: 3px 3px 0 0;
  background: linear-gradient(#fcfcf9, #eae8dc);
}
.tab.active {
  height: 29px;
  padding-right: 4px;
  border-left: none;
  border-top: 2px solid #f3aa36;
  background: #fcfcfd;
}
.tab svg {
  width: 20px;
  height: 20px;
}
.panel {
  flex: 1;
  min-height: 0;
  display: flex;
  flex-direction: column;
  border-top: 1px solid #a2a195;
  border-right: 1px solid #6c7d94;
  background: #fcfcfd;
}
.panel-head {
  display: flex;
  justify-content: space-between;
  height: 17px;
}
h2 {
  margin: 1px 0 0;
  font-size: 10px;
  font-weight: normal;
}
.panel-menu {
  width: 8px;
  height: 5px;
  margin: 3px 3px 0 0;
}
.panel-actions {
  display: flex;
  gap: 2px;
  padding-bottom: 2px;
}
.panel-actions button {
  display: flex;
  align-items: center;
  height: 18px;
  white-space: pre;
  border: 1px solid #234b73;
  border-radius: 3px;
  background: linear-gradient(#fff, #efeee8);
}
.panel-actions .show {
  width: 58px;
  padding-left: 14px;
  border-left: none;
  border-radius: 0 3px 3px 0;
}
.panel-actions .settings {
  width: 84px;
  padding-left: 16px;
}
.panel-actions svg {
  width: 8px;
  height: 5px;
}
.column-head {
  height: 14px;
  flex: none;
  margin-right: 2px;
  border: 1px solid #a8a798;
  border-left: none;
  border-bottom-color: #c6c3b2;
  background: #ebeadb;
}
.tree-wrap {
  flex: 1;
  min-height: 0;
  display: flex;
  margin-right: 2px;
  border-right: 1px solid #8c9aad;
  background: #fff;
}
.tree {
  flex: 1;
  margin: 0;
  padding: 0;
  overflow: hidden;
  list-style: none;
}
.tree li {
  display: flex;
  align-items: center;
  position: relative;
  height: 16px;
  margin-left: 9px;
  border-left: 1px dotted #999;
  white-space: nowrap;
}
.branch {
  width: 11px;
  border-top: 1px dotted #999;
}
.expand {
  position: absolute;
  left: -5px;
  width: 9px;
  height: 9px;
}
.expand svg {
  width: 9px;
  height: 9px;
}
.node-icon {
  width: 16px;
  height: 16px;
  margin-right: 2px;
}
.scrollbar {
  display: flex;
  flex-direction: column;
  width: 17px;
  padding: 3px 0 0;
  background: #f8f8f4;
}
.scrollbar button {
  display: flex;
  align-items: center;
  justify-content: center;
  height: 16px;
  width: 15px;
  margin: 0 1px;
  flex: none;
  border: 1px solid #a9bff0;
  border-radius: 2px;
  background: #c2d3fb;
}
.track {
  flex: 1;
  padding-top: 13px;
}
.thumb {
  display: flex;
  flex-direction: column;
  gap: 1px;
  align-items: center;
  justify-content: center;
  height: 58px;
  margin: 0 1px;
  border: 1px solid #a5bbf0;
  border-radius: 2px;
  background: #c5d5fc;
  box-sizing: border-box;
}
.thumb i {
  width: 7px;
  height: 1px;
  background: #edf3ff;
}
.sash {
  flex: none;
  width: 7px;
  box-sizing: border-box;
  border-left: 1px solid #7787a5;
  background: #e9e9e2;
}
.sash button {
  display: flex;
  align-items: center;
  justify-content: center;
  width: 6px;
  height: 50px;
  margin-top: 246px;
  background: #b9c9f6;
}
.sash svg {
  width: 5px;
  height: 6px;
}
.sash-right {
  border-left: 2px solid #7b93d6;
}
.sash-right button {
  width: 5px;
  margin-top: 296px;
}
.viewport {
  flex: 1;
  min-width: 0;
  background: linear-gradient(#9d9a8e, #c0bdb0 48%, #dfddd3);
}
.scene {
  width: 100%;
  height: 100%;
}
.datum {
  fill: none;
  stroke: #9a6b36;
}
.tags {
  fill: #ccc4b0;
}
.labels {
  fill: #96602a;
  font-size: 10px;
}
.feature-bars {
  display: flex;
  flex: none;
  padding-top: 4px;
  background: linear-gradient(90deg, #f4f4ee, #eceadb);
}
.feature-col:first-child {
  width: 41px;
}
.feature-col:last-child {
  width: 28px;
}
.hgrip {
  display: block;
  height: 2px;
  margin: 0 1px 5px;
  background: repeating-linear-gradient(90deg, #aaa79b 0 2px, transparent 2px 4px);
}
.hgrip.spaced {
  margin: 6px 1px;
}
.feature-row {
  display: flex;
  align-items: center;
}
.flyout {
  width: 4px;
  height: 6px;
  margin-left: 5px;
}
.watermark {
  position: absolute;
  right: 1px;
  bottom: 5px;
  display: flex;
  align-items: center;
  width: 207px;
  height: 62px;
  background: rgba(255, 255, 255, 0.4);
}
.watermark svg {
  width: 60px;
  height: 58px;
}
.watermark div {
  display: flex;
  flex-direction: column;
}
.watermark strong {
  padding-left: 10px;
  font-family: 'Noto Sans CJK SC', sans-serif;
  font-size: 29px;
  line-height: 36px;
  color: #85c69a;
}
.watermark span {
  font-family: 'Open Sans', sans-serif;
  font-size: 15px;
  line-height: 20px;
  color: #b5cfc2;
}
</style>
